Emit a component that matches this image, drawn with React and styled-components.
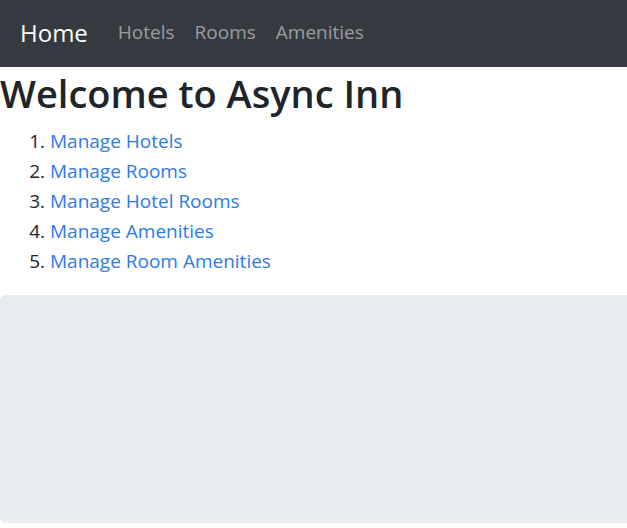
import React from 'react';
import styled, { createGlobalStyle } from 'styled-components';

const GlobalStyle = createGlobalStyle`
  html, body {
    margin: 0;
    padding: 0;
    background: #fff;
    overflow: hidden;
  }
  body {
    font-family: "Open Sans", "Noto Sans", sans-serif;
    font-size: 19px;
    line-height: 1.5;
    color: #212529;
  }
`;

const links = [
  'Manage Hotels',
  'Manage Rooms',
  'Manage Hotel Rooms',
  'Manage Amenities',
  'Manage Room Amenities',
];

const App = () => (
  <>
    <GlobalStyle />
    <Navbar>
      <Brand href="#">Home</Brand>
      <NavList>
        <NavItem><NavLink href="#">Hotels</NavLink></NavItem>
        <NavItem><NavLink href="#">Rooms</NavLink></NavItem>
        <NavItem><NavLink href="#">Amenities</NavLink></NavItem>
      </NavList>
    </Navbar>
    <Main>
      <Title>Welcome to Async Inn</Title>
      <LinkList>
        {links.map((text) => (
          <LinkItem key={text}>
            <PageLink href="#">{text}</PageLink>
          </LinkItem>
        ))}
      </LinkList>
      <Jumbotron />
    </Main>
  </>
);

export default App;

const Navbar = styled.nav`
  display: flex;
  align-items: center;
  height: 67px;
  box-sizing: border-box;
  padding: 0 20px 2px;
  background-color: #343a40;
`;

const Brand = styled.a`
  margin-right: 20px;
  font-size: 24px;
  color: #fff;
  text-decoration: none;
  white-space: nowrap;
`;

const NavList = styled.ul`
  display: flex;
  margin: 0;
  padding: 0;
  list-style: none;
`;

const NavItem = styled.li`
  display: block;
`;

const NavLink = styled.a`
  display: block;
  padding: 0 10px;
  font-size: 19px;
  color: rgba(255, 255, 255, 0.5);
  text-decoration: none;
`;

const Main = styled.main`
  display: flex;
  flex-direction: column;
`;

const Title = styled.h1`
  margin: 4px 0 9px 0;
  font-size: 38px;
  font-weight: 600;
  line-height: 1.2;
`;

const LinkList = styled.ol`
  margin: 0 0 19px 0;
  padding-left: 50px;
`;

const LinkItem = styled.li`
  line-height: 30px;
`;

const PageLink = styled.a`
  color: #2e7be6;
  text-decoration: none;
`;

const Jumbotron = styled.div`
  height: 228px;
  margin-right: -10px;
  border-radius: 6px;
  background-color: #e9ecef;
`;
